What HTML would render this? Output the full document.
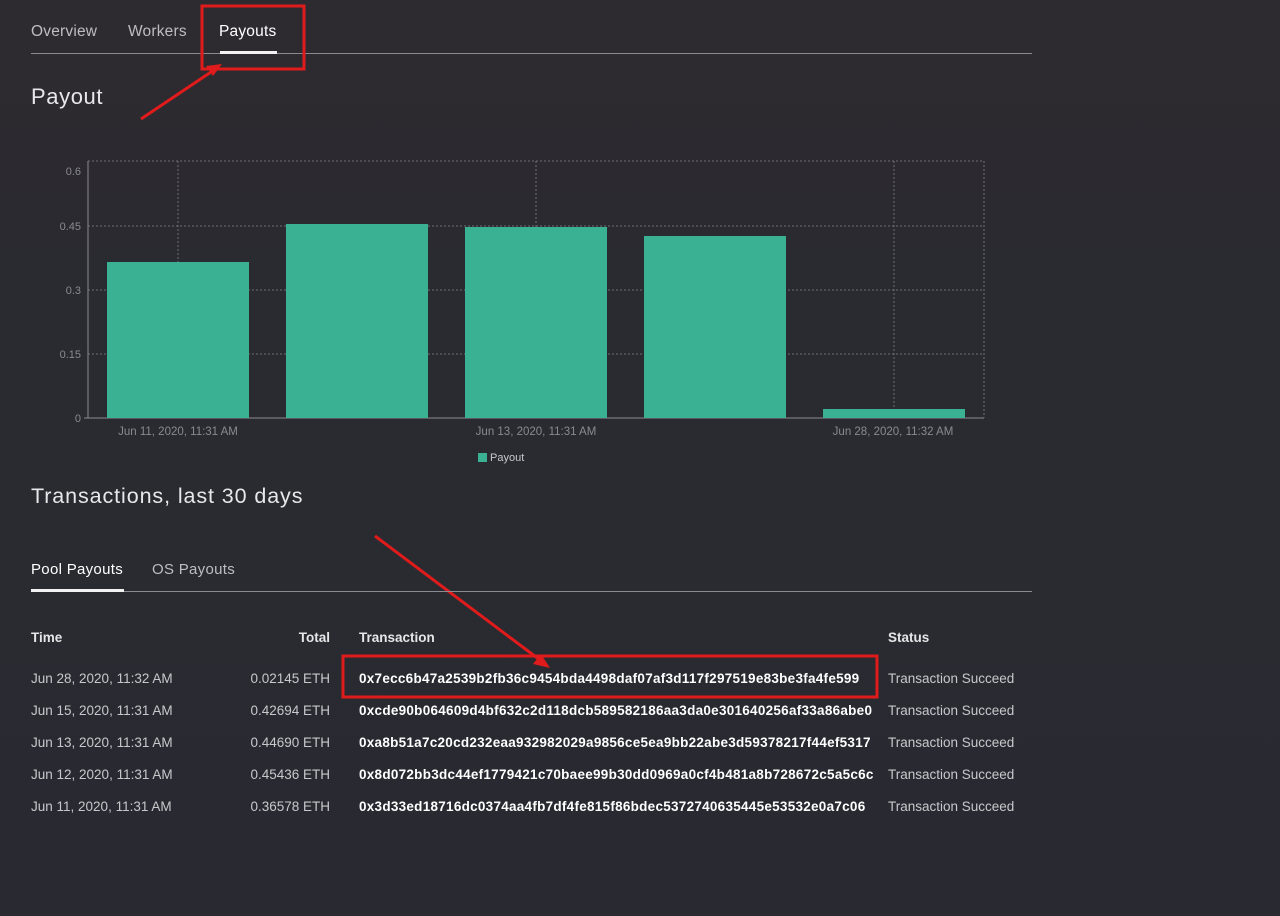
<!DOCTYPE html>
<html><head><style>
body{margin:0;width:1280px;height:916px;background:linear-gradient(#2e2b30,#2a2a31 300px,#292a31);font-family:"Liberation Sans",sans-serif;color:#d9d9dc;position:relative;overflow:hidden}
.a{position:absolute;white-space:nowrap}
.tab{font-size:15.5px;color:#bdbdc2;top:23px;letter-spacing:0.2px}
.r{font-size:13.5px;color:#c8c8cc}
.h{font-size:13.5px;font-weight:bold;color:#e6e6e8;top:630px}
.tx{font-size:13.5px;font-weight:bold;color:#fff;left:359px;letter-spacing:0.27px}
</style></head><body>
<div class="a tab" style="left:31px">Overview</div>
<div class="a tab" style="left:128px">Workers</div>
<div class="a tab" style="left:219px;color:#fff">Payouts</div>
<div class="a" style="left:31px;top:53px;width:1001px;height:1px;background:#8a8a90"></div>
<div class="a" style="left:220px;top:51px;width:57px;height:3px;background:#f2f2f2"></div>
<div class="a" style="left:31px;top:84px;font-size:22px;color:#e8e8ea;letter-spacing:0.6px">Payout</div>
<svg class="a" style="left:0;top:0" width="1280" height="916">
<g stroke="#6e6e74" stroke-dasharray="2,2" fill="none">
<line x1="88" y1="161" x2="984" y2="161"/><line x1="88" y1="226" x2="984" y2="226"/><line x1="88" y1="290" x2="984" y2="290"/><line x1="88" y1="354" x2="984" y2="354"/>
<line x1="178" y1="161" x2="178" y2="418"/><line x1="536" y1="161" x2="536" y2="418"/><line x1="894" y1="161" x2="894" y2="418"/><line x1="984" y1="161" x2="984" y2="418"/>
</g>
<line x1="88" y1="161" x2="88" y2="418" stroke="#8a8a90"/><line x1="84" y1="418" x2="984" y2="418" stroke="#8a8a90"/>
<g fill="#3ab192">
<rect x="107" y="262" width="142" height="156"/><rect x="286" y="224" width="142" height="194"/><rect x="465" y="227" width="142" height="191"/><rect x="644" y="236" width="142" height="182"/><rect x="823" y="409" width="142" height="9"/>
<rect x="478" y="453" width="9" height="9"/>
</g>
<g fill="#8a8a90" font-size="11" font-family="Liberation Sans" text-anchor="end">
<text x="81" y="175">0.6</text><text x="81" y="230">0.45</text><text x="81" y="294">0.3</text><text x="81" y="358">0.15</text><text x="81" y="422">0</text>
</g>
<g fill="#8a8a90" font-size="11.5" font-family="Liberation Sans" text-anchor="middle">
<text x="178" y="435">Jun 11, 2020, 11:31 AM</text><text x="536" y="435">Jun 13, 2020, 11:31 AM</text><text x="893" y="435">Jun 28, 2020, 11:32 AM</text>
</g>
<text x="490" y="461" fill="#c8c8cc" font-size="11" font-family="Liberation Sans">Payout</text>
<g stroke="#e01b1b" stroke-width="3" fill="none">
<rect x="202" y="6" width="102" height="63"/><rect x="343" y="656" width="534" height="41"/>
<line x1="141" y1="119" x2="214" y2="70"/><line x1="375" y1="536" x2="540" y2="660"/>
</g>
<g fill="#e01b1b"><polygon points="222,64 206,66 213,76"/><polygon points="550,668 533,664 541,654"/></g>
</svg>
<div class="a" style="left:31px;top:484px;font-size:21.5px;color:#e8e8ea;letter-spacing:0.9px">Transactions, last 30 days</div>
<div class="a" style="left:31px;top:561px;font-size:15px;color:#fff;letter-spacing:0.3px">Pool Payouts</div>
<div class="a" style="left:152px;top:561px;font-size:15px;color:#bdbdc2;letter-spacing:0.3px">OS Payouts</div>
<div class="a" style="left:31px;top:591px;width:1001px;height:1px;background:#8a8a90"></div>
<div class="a" style="left:31px;top:589px;width:93px;height:3px;background:#f2f2f2"></div>
<div class="a h" style="left:31px">Time</div>
<div class="a h" style="right:950px">Total</div>
<div class="a h" style="left:359px">Transaction</div>
<div class="a h" style="left:888px">Status</div>
<div class="a r" style="left:31px;top:671px">Jun 28, 2020, 11:32 AM</div><div class="a r" style="right:950px;top:671px">0.02145 ETH</div><div class="a tx" style="top:671px">0x7ecc6b47a2539b2fb36c9454bda4498daf07af3d117f297519e83be3fa4fe599</div><div class="a r" style="left:888px;top:671px">Transaction Succeed</div>
<div class="a r" style="left:31px;top:703px">Jun 15, 2020, 11:31 AM</div><div class="a r" style="right:950px;top:703px">0.42694 ETH</div><div class="a tx" style="top:703px">0xcde90b064609d4bf632c2d118dcb589582186aa3da0e301640256af33a86abe0</div><div class="a r" style="left:888px;top:703px">Transaction Succeed</div>
<div class="a r" style="left:31px;top:735px">Jun 13, 2020, 11:31 AM</div><div class="a r" style="right:950px;top:735px">0.44690 ETH</div><div class="a tx" style="top:735px">0xa8b51a7c20cd232eaa932982029a9856ce5ea9bb22abe3d59378217f44ef5317</div><div class="a r" style="left:888px;top:735px">Transaction Succeed</div>
<div class="a r" style="left:31px;top:767px">Jun 12, 2020, 11:31 AM</div><div class="a r" style="right:950px;top:767px">0.45436 ETH</div><div class="a tx" style="top:767px">0x8d072bb3dc44ef1779421c70baee99b30dd0969a0cf4b481a8b728672c5a5c6c</div><div class="a r" style="left:888px;top:767px">Transaction Succeed</div>
<div class="a r" style="left:31px;top:799px">Jun 11, 2020, 11:31 AM</div><div class="a r" style="right:950px;top:799px">0.36578 ETH</div><div class="a tx" style="top:799px">0x3d33ed18716dc0374aa4fb7df4fe815f86bdec5372740635445e53532e0a7c06</div><div class="a r" style="left:888px;top:799px">Transaction Succeed</div>
</body></html>
